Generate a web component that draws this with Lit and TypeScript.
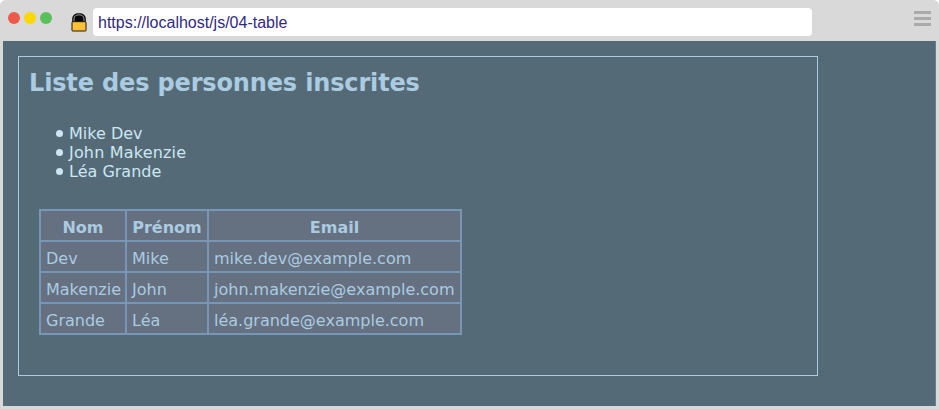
import { LitElement, html, css } from "lit";
import { customElement } from "lit/decorators.js";

interface Person { last: string; first: string; email: string }

const people: Person[] = [
  { last: "Dev", first: "Mike", email: "mike.dev@example.com" },
  { last: "Makenzie", first: "John", email: "john.makenzie@example.com" },
  { last: "Grande", first: "Léa", email: "léa.grande@example.com" },
];

@customElement("browser-bar")
export class BrowserBar extends LitElement {
  static styles = css`
    :host { display: flex; height: 41px; box-sizing: border-box; padding: 8px 8px 0; align-items: flex-start; background: #d9d9d9; }
    .dots { display: flex; gap: 4px; margin-top: 4px; }
    .dot { width: 12px; height: 12px; border-radius: 50%; }
    .red { background: #ed594a; }
    .yellow { background: #fdd800; }
    .green { background: #5ac05a; }
    .lock { display: block; margin: 4px 6px 0 19px; }
    .url { width: 719px; height: 28px; box-sizing: border-box; padding-left: 5px; border-radius: 4px; background: #fff; color: #302a80; font: 16px/29px "Liberation Sans", sans-serif; }
    .menu { display: flex; flex-direction: column; gap: 3px; margin: 3px 0 0 auto; }
    .line { width: 17px; height: 3px; background: #aaa; }
  `;
  render() {
    return html`
      <div class="dots"><span class="dot red"></span><span class="dot yellow"></span><span class="dot green"></span></div>
      <svg class="lock" width="16" height="20" viewBox="0 0 16 20">
        <path d="M1.2 10.5V7C1.2 3 4 1.2 8 1.2S14.8 3 14.8 7V10.5Z" fill="#050505"/>
        <path d="M3 9.5V7C3 4 5 2.8 8 2.8S13 4 13 7V9.5" fill="none" stroke="#c4c4c4" stroke-width=".8"/>
        <rect x="1" y="9.7" width="14" height="9.3" rx=".8" fill="#ffc236" stroke="#241b08"/>
      </svg>
      <div class="url">https://localhost/js/04-table</div>
      <div class="menu"><span class="line"></span><span class="line"></span><span class="line"></span></div>`;
  }
}

@customElement("app-root")
export class AppRoot extends LitElement {
  static styles = css`
    :host { display: block; height: 409px; background: #fff; }
    .window { height: 409px; box-sizing: border-box; border-radius: 6px 6px 0 0; overflow: hidden; background: #d9d9d9; }
    .page { height: 365px; box-sizing: border-box; margin: 0 3px; padding: 15px; background: #546a77; border-right: 1px solid #688090; font: 16px/19px "DejaVu Sans", sans-serif; }
    .panel { width: 800px; height: 320px; box-sizing: border-box; border: 1px solid #abcbe5; padding: 10px; color: #abcbe0; }
    h1 { margin: 0; font-size: 24px; line-height: 33px; font-weight: bold; letter-spacing: -0.15px; white-space: nowrap; }
    ul { margin: 24px 0 28px; padding-left: 27px; color: #cde6f2; list-style: none; }
    li { display: flex; align-items: center; gap: 6px; }
    li::before { content: ""; width: 7px; height: 7px; border-radius: 50%; background: #cde6f2; }
    li:nth-child(2) { letter-spacing: 0.18px; }
    table { margin-left: 10px; border-collapse: collapse; table-layout: fixed; width: 423px; background: #657080; }
    th, td { box-sizing: border-box; height: 31px; border: 2px solid #7897b6; padding: 4px 5px 0; white-space: nowrap; text-align: left; }
    th { text-align: center; font-weight: bold; }
    .last { width: 86px; }
    .first { width: 82px; }
  `;
  render() {
    return html`
      <div class="window">
        <browser-bar></browser-bar>
        <main class="page">
          <section class="panel">
            <h1>Liste des personnes inscrites</h1>
            <ul>${people.map((p) => html`<li>${p.first} ${p.last}</li>`)}</ul>
            <table>
              <colgroup><col class="last"><col class="first"><col></colgroup>
              <thead><tr><th>Nom</th><th>Prénom</th><th>Email</th></tr></thead>
              <tbody>${people.map((p) => html`<tr><td>${p.last}</td><td>${p.first}</td><td>${p.email}</td></tr>`)}</tbody>
            </table>
          </section>
        </main>
      </div>`;
  }
}
